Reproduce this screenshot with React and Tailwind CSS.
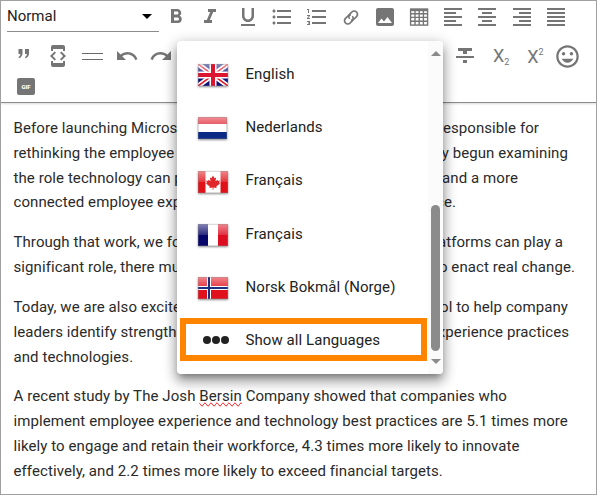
import {
  MdFormatBold, MdFormatItalic, MdFormatUnderlined, MdFormatListBulleted,
  MdFormatListNumbered, MdImage, MdFormatAlignLeft, MdFormatAlignCenter,
  MdFormatAlignRight, MdFormatAlignJustify, MdDeveloperMode, MdUndo, MdRedo,
  MdFormatStrikethrough, MdInsertEmoticon,
} from "react-icons/md";

function TableIcon() {
  return (
    <svg width="24" height="24" viewBox="0 0 24 24" fill="none" stroke="currentColor">
      <rect x="3.6" y="4.1" width="17" height="16" strokeWidth="1.4" />
      <path d="M3 5h18" strokeWidth="2.4" />
      <path d="M3 8.700h18M3 12.400h18M3 16.300h18M8 6v14M12.200 6v14M16.400 6v14" strokeWidth="1.400" />
    </svg>
  );
}

function LinkIcon() {
  return (
    <svg width="24" height="24" viewBox="0 0 24 24" fill="none" stroke="currentColor" strokeWidth="1.7">
      <g transform="translate(12 12.500) rotate(-45)">
        <path d="M1.600 -1.800A3.500 3.500 0 0 0 -1.500 -3.300H-4.500a3.300 3.300 0 0 0 0 6.600H-1.500A3.300 3.300 0 0 0 1.800 0" />
        <path d="M-1.600 1.800A3.500 3.500 0 0 0 1.500 3.300H4.500a3.300 3.300 0 0 0 0 -6.600H1.500A3.300 3.300 0 0 0 -1.800 0" />
      </g>
    </svg>
  );
}

function QuoteIcon() {
  return (
    <svg width="24" height="24" viewBox="0 0 24 24" fill="currentColor">
      <path d="M6.500 5h4v4.500c0 2.300-1.200 3.800-3.400 4.700l-.7-1.100c1.300-.7 2-1.700 2-3H6.500zM13 5h4v4.500c0 2.300-1.200 3.800-3.400 4.700l-.7-1.100c1.300-.7 2-1.700 2-3H13z" />
    </svg>
  );
}

function Tool({ children }) {
  return <div className="flex h-6 w-[34.2px] shrink-0 items-center justify-center">{children}</div>;
}

function Flag({ country }) {
  const glossId = `gloss-${country}`;
  const width = country === "nl" ? 29 : 30;
  return (
    <svg width="30" height="22" viewBox="0 0 30 22" className="drop-shadow-[0_1px_1px_rgba(0,0,0,0.45)]">
      <defs>
        <linearGradient id={glossId} x1="0" y1="0" x2="0" y2="1">
          <stop offset="0" stopColor="#fff" stopOpacity=".5" />
          <stop offset="1" stopColor="#fff" stopOpacity=".15" />
        </linearGradient>
      </defs>
      {country === "gb" && (
        <g>
          <path fill="#10107a" d="M0 0h30v22H0z" />
          <path d="M0 0l30 22M30 0L0 22" stroke="#fff" strokeWidth="5" />
          <path d="M0 0l30 22M30 0L0 22" stroke="#e01b2c" strokeWidth="1.600" />
          <path d="M15 0v22M0 11h30" stroke="#fff" strokeWidth="7" />
        </g>
      )}
      {country === "nl" && (
        <g>
          <path fill="#fff" d="M0 0h29v22H0z" />
          <path fill="#e0202c" d="M0 0h29v7H0z" />
          <path fill="#0a2a86" d="M0 15h29v7H0z" />
        </g>
      )}
      {country === "ca" && (
        <g>
          <path fill="#fff" d="M0 0h30v22H0z" />
          <path fill="#e01118" d="M0 0h7.500v22H0zM22.500 0H30v22h-7.500z" />
        </g>
      )}
      {country === "fr" && (
        <g>
          <path fill="#fff" d="M0 0h30v22H0z" />
          <path fill="#06066b" d="M0 0h10v22H0z" />
          <path fill="#dc0d20" d="M20 0h10v22H20z" />
        </g>
      )}
      {country === "no" && (
        <g>
          <path fill="#e0101c" d="M0 0h30v22H0z" />
          <path d="M11 0v22M0 11h30" stroke="#fff" strokeWidth="4" />
        </g>
      )}
      <rect width={width} height="11" fill={`url(#${glossId})`} />
      {country === "gb" && <path d="M15 0v22M0 11h30" stroke="#dc1430" strokeWidth="4" />}
      {country === "no" && <path d="M11 0v22M0 11h30" stroke="#1c2f80" strokeWidth="2" />}
      {country === "ca" && (
        <path fill="#e0252b" d="M15 4.500l1.500 2.800 1.600-.7-.6 3.700 2-1.600.5 1.200 1.900-.3-.8 2.200.9.800-3.700 3 .3 1.400-3.200-.4v2.200h-.8v-2.200l-3.200.4.3-1.400-3.700-3 .9-.8-.8-2.200 1.900.3.500-1.200 2 1.600-.6-3.700 1.600.7z" />
      )}
      <rect x=".5" y=".5" width={width - 1} height="21" fill="none" stroke="#888" strokeOpacity=".3" />
    </svg>
  );
}

const languages = [
  ["gb", "English"],
  ["nl", "Nederlands"],
  ["ca", "Français"],
  ["fr", "Français"],
  ["no", "Norsk Bokmål (Norge)"],
];

/* A line whose middle sits behind the language menu. */
function SplitLine({ left, right, width }) {
  return (
    <div className="flex justify-between whitespace-nowrap" style={{ width }}>
      <span>{left}</span>
      <span>{right}</span>
    </div>
  );
}

function Toolbar() {
  return (
    <div className="h-[102px] border-b border-[#8c8c8c] text-[#757575] shadow-[0_1px_2px_rgba(0,0,0,0.15)]">
      <div className="flex h-[31px] items-center pl-[6px]">
        <div className="flex h-[31px] w-[152px] items-center justify-between border-b border-[#8c8c8c] pr-[7px] text-[15px] text-[#222]">
          <span>Normal</span>
          <span className="h-0 w-0 border-x-[5px] border-t-[5px] border-x-transparent border-t-black" />
        </div>
        <div className="flex">
          <Tool><MdFormatBold size={24} /></Tool>
          <Tool><MdFormatItalic size={24} /></Tool>
        </div>
        <div className="ml-[3.700px] flex">
          <Tool><MdFormatUnderlined size={24} /></Tool>
          <Tool><MdFormatListBulleted size={24} /></Tool>
          <Tool><MdFormatListNumbered size={24} /></Tool>
          <Tool><LinkIcon /></Tool>
          <Tool><MdImage size={24} /></Tool>
          <Tool><TableIcon /></Tool>
          <Tool><MdFormatAlignLeft size={24} /></Tool>
          <Tool><MdFormatAlignCenter size={24} /></Tool>
          <Tool><MdFormatAlignRight size={24} /></Tool>
          <Tool><MdFormatAlignJustify size={24} /></Tool>
        </div>
      </div>
      <div className="flex h-[48px] items-center pl-[6px]">
        <Tool><QuoteIcon /></Tool>
        <Tool><MdDeveloperMode size={24} /></Tool>
        <Tool><div className="h-[7px] w-[21px] border-y border-[#6a6a6a]" /></Tool>
        <Tool><MdUndo size={24} /></Tool>
        <Tool><MdRedo size={24} /></Tool>
        <div className="ml-[270px] flex">
          <Tool><MdFormatStrikethrough size={24} /></Tool>
          <Tool><span className="pl-1 text-[18px] leading-none">X<span className="relative top-[3px] text-[9px]">2</span></span></Tool>
          <Tool><span className="pl-1 pt-[2px] text-[18px] leading-none">X<span className="relative -top-[8px] text-[9px]">2</span></span></Tool>
          <Tool><MdInsertEmoticon size={27} /></Tool>
        </div>
      </div>
      <div className="-mt-[2px] flex pl-[16px]">
        <div className="flex h-[17px] w-[18px] items-center justify-center rounded-[2px] bg-[#757575] text-[6px] font-black leading-none text-white">GIF</div>
      </div>
    </div>
  );
}

function LanguageMenu() {
  return (
    <div className="absolute left-[176px] top-[40px] flex h-[333px] w-[266px] overflow-hidden rounded bg-white text-[15px] tracking-[0.070px] text-[#222] shadow-[0_5px_6px_-3px_rgba(0,0,0,0.3),0_8px_12px_1px_rgba(0,0,0,0.22),0_3px_14px_2px_rgba(0,0,0,0.2)]">
      <div className="flex grow flex-col pt-[6.500px]">
        {languages.map(([country, name], i) => (
          <div key={i} className="flex h-[53.250px] items-center pl-[20.500px]">
            <div className="mt-[2px] w-[48px]"><Flag country={country} /></div>
            <span>{name}</span>
          </div>
        ))}
        <div className="ml-[3px] mt-[4.250px] flex h-[43px] w-[247px] shrink-0 items-center border-[6px] border-[#ff8400] pl-[17px]">
          <div className="flex w-[42.500px] gap-[1px]">
            <span className="h-[8px] w-[8px] rounded-full bg-[#222]" />
            <span className="h-[8px] w-[8px] rounded-full bg-[#222]" />
            <span className="h-[8px] w-[8px] rounded-full bg-[#222]" />
          </div>
          <span className="pt-[1.500px]">Show all Languages</span>
        </div>
      </div>
      <div className="flex w-[15px] shrink-0 flex-col items-center bg-[#fbfbfb] pt-[10px]">
        <span className="h-0 w-0 border-x-[5px] border-b-[5px] border-x-transparent border-b-[#8b8b8b]" />
        <span className="mt-[149px] h-[146px] w-[9px] rounded-full bg-[#8b8b8b]" />
        <span className="mt-[8px] h-0 w-0 border-x-[5px] border-t-[5px] border-x-transparent border-t-[#8b8b8b]" />
      </div>
    </div>
  );
}

export default function App() {
  return (
    <div className="relative h-[495px] w-[597px] overflow-hidden border border-[#a0a0a0] bg-white font-['Roboto',sans-serif]">
      <Toolbar />
      <div className="flex flex-col gap-[15.100px] pl-[12.500px] pt-[13px] text-[15px] leading-[24.800px] tracking-[0.080px] text-[#2a2a2a]">
        <div>
          <SplitLine left="Before launching Micros" right="responsible for" width={525.5} />
          <SplitLine left="rethinking the employee" right="ly begun examining" width={554.5} />
          <SplitLine left="the role technology can p" right="and a more" width={504.5} />
          <SplitLine left="connected employee exp" right="ence." width={442.5} />
        </div>
        <div>
          <SplitLine left="Through that work, we fo" right="atforms can play a" width={549.5} />
          <SplitLine left="significant role, there mus" right="to enact real change." width={561.5} />
        </div>
        <div>
          <SplitLine left="Today, we are also excited" right="ool to help company" width={554.5} />
          <SplitLine left="leaders identify strengths" right="experience practices" width={555.5} />
          <div>and technologies.</div>
        </div>
        <div className="whitespace-nowrap">
          <div>A recent study by The Josh <span className="[text-decoration-line:spelling-error]">Bersin</span> Company showed that companies who</div>
          <div>implement employee experience and technology best practices are 5.1 times more</div>
          <div>likely to engage and retain their workforce, 4.3 times more likely to innovate</div>
          <div>effectively, and 2.2 times more likely to exceed financial targets.</div>
        </div>
      </div>
      <LanguageMenu />
    </div>
  );
}
